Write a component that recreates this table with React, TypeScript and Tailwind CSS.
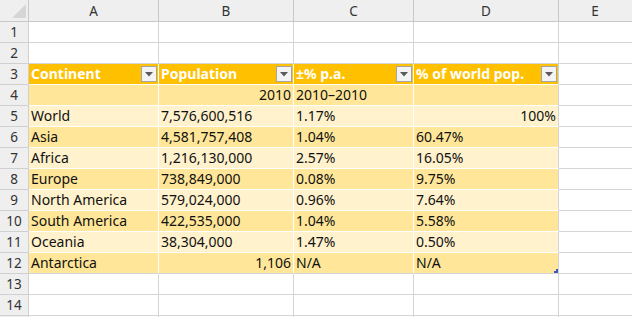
import React from "react";

const font = { fontFamily: '"Noto Sans", "Liberation Sans", sans-serif' };

type Cell = { t: string; r?: boolean };
const dataRows: Cell[][] = [
  [{ t: "" }, { t: "2010", r: true }, { t: "2010–2010" }, { t: "" }],
  [{ t: "World" }, { t: "7,576,600,516" }, { t: "1.17%" }, { t: "100%", r: true }],
  [{ t: "Asia" }, { t: "4,581,757,408" }, { t: "1.04%" }, { t: "60.47%" }],
  [{ t: "Africa" }, { t: "1,216,130,000" }, { t: "2.57%" }, { t: "16.05%" }],
  [{ t: "Europe" }, { t: "738,849,000" }, { t: "0.08%" }, { t: "9.75%" }],
  [{ t: "North America" }, { t: "579,024,000" }, { t: "0.96%" }, { t: "7.64%" }],
  [{ t: "South America" }, { t: "422,535,000" }, { t: "1.04%" }, { t: "5.58%" }],
  [{ t: "Oceania" }, { t: "38,304,000" }, { t: "1.47%" }, { t: "0.50%" }],
  [{ t: "Antarctica" }, { t: "1,106", r: true }, { t: "N/A" }, { t: "N/A" }],
];

const widths = ["w-[130px]", "w-[135px]", "w-[120px]", "w-[145px]"];
const headers = ["Continent", "Population", "±% p.a.", "% of world pop."];

function RowHead({ n }: { n?: number }) {
  return (
    <div className="w-[29px] h-full shrink-0 bg-[#efefef] border-r border-b border-[#d0d0d0] flex items-center justify-center text-[13.5px] text-[#333]">
      {n}
    </div>
  );
}

function Dropdown() {
  return (
    <div className="absolute right-[1px] top-[2px] w-[16px] h-[16px] border border-[#a6a6a6] bg-[#f3f3f3] flex items-center justify-center">
      <svg width="8" height="5" viewBox="0 0 8 5">
        <polygon points="0,0 8,0 4,4.5" fill="#5a5a5a" />
      </svg>
    </div>
  );
}

function EmptyRow({ n }: { n?: number }) {
  return (
    <div className="flex h-[21px]">
      <RowHead n={n} />
      {widths.map((w, i) => (
        <div key={i} className={`${w} shrink-0 border-r border-b border-[#d4d4d4] bg-white`} />
      ))}
      <div className="flex-1 border-b border-[#d4d4d4] bg-white" />
    </div>
  );
}

export default function App() {
  return (
    <div className="w-[632px] h-[317px] overflow-hidden bg-white text-[14px] leading-[20px] text-[#111]" style={font}>
      {/* column header */}
      <div className="flex h-[22px]">
        <div className="w-[29px] shrink-0 bg-[#efefef] border-r border-b border-[#c8c8c8] relative">
          <svg className="absolute right-[2px] bottom-[3px]" width="14" height="14" viewBox="0 0 14 14">
            <polygon points="14,0 14,14 0,14" fill="#d6d6d6" />
          </svg>
        </div>
        {["A", "B", "C", "D"].map((l, i) => (
          <div key={l} className={`${widths[i]} shrink-0 bg-[#efefef] border-r border-b border-[#c8c8c8] flex items-center justify-center text-[13.5px] text-[#333]`}>
            {l}
          </div>
        ))}
        <div className="flex-1 bg-[#efefef] border-b border-[#c8c8c8] flex items-center justify-center text-[13.5px] text-[#333] pr-[1px]">
          E
        </div>
      </div>
      <EmptyRow n={1} />
      <EmptyRow n={2} />
      {/* table header row */}
      <div className="flex h-[21px]">
        <RowHead n={3} />
        {headers.map((h, i) => (
          <div
            key={h}
            className={`${widths[i]} shrink-0 relative bg-[#ffc000] border-b border-white ${i === 3 ? "border-r border-r-[#d4d4d4]" : "border-r border-white"} pl-[2px] font-bold text-white whitespace-nowrap overflow-hidden`}
          >
            {h}
            <Dropdown />
          </div>
        ))}
        <div className="flex-1 border-b border-[#d4d4d4] bg-white" />
      </div>
      {dataRows.map((row, ri) => {
        const bg = ri % 2 === 0 ? "bg-[#ffe699]" : "bg-[#fff2cc]";
        const last = ri === dataRows.length - 1;
        return (
          <div key={ri} className="flex h-[21px]">
            <RowHead n={ri + 4} />
            {row.map((c, ci) => (
              <div
                key={ci}
                className={`${widths[ci]} shrink-0 relative ${bg} ${last ? "border-b border-[#d4d4d4]" : "border-b border-white"} ${ci === 3 ? "border-r border-r-[#d4d4d4]" : "border-r border-r-white"} px-[2px] whitespace-nowrap overflow-hidden ${c.r ? "text-right" : "text-left"}`}
              >
                {c.t}
                {last && ci === 3 && (
                  <>
                    <div className="absolute right-0 bottom-0 w-[4px] h-[2px] bg-[#4058c0]" />
                    <div className="absolute right-0 bottom-0 w-[2px] h-[4px] bg-[#4058c0]" />
                  </>
                )}
              </div>
            ))}
            <div className="flex-1 border-b border-[#d4d4d4] bg-white" />
          </div>
        );
      })}
      <EmptyRow n={13} />
      <EmptyRow n={14} />
      <EmptyRow />
    </div>
  );
}
